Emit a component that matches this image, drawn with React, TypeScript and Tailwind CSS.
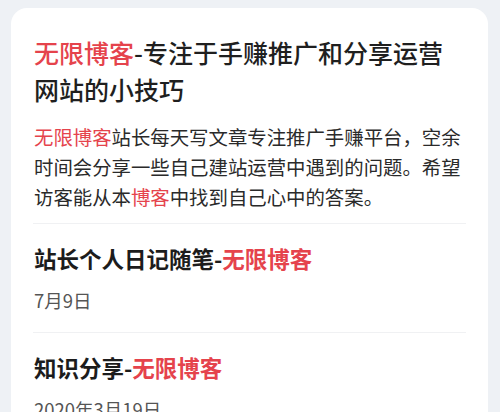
import React from "react";

const red = "text-[#e5434c]";

const posts = [
  { title: "站长个人日记随笔", date: "7月9日" },
  { title: "知识分享", date: "2020年3月19日" },
];

export default function App() {
  return (
    <div
      className="h-[412px] overflow-hidden bg-[#eef1f5] pt-2 pl-[11px] pr-3"
      style={{ fontFamily: '"Noto Sans CJK SC", "Noto Sans", sans-serif' }}
    >
      <div className="rounded-2xl bg-white px-[22px] pt-[26px] pb-8">
        {/* Intro */}
        <h1 className="text-[25px] leading-[37px] font-medium text-[#1f1f1f] pl-px">
          <span className={red}>无限博客</span>-专注于手赚推广和分享运营网站的小技巧
        </h1>
        <p className="mt-[14px] text-[19.4px] leading-[30px] text-[#2a2a2a] pl-px">
          <span className={red}>无限博客</span>站长每天写文章专注推广手赚平台，空余时间会分享一些自己建站运营中遇到的问题。希望访客能从本
          <span className={red}>博客</span>中找到自己心中的答案。
        </p>

        {/* Post list */}
        <div className="mt-[11px]">
          {posts.map((post, index) => (
            <div key={index} className="border-t border-[#f0f1f3] pt-[18px] pb-[19px] pl-px">
              <h2 className="text-[22.5px] leading-[32px] font-semibold text-[#1c1c1c]">
                {post.title}-<span className={red}>无限博客</span>
              </h2>
              <div className="mt-[13px] text-[18.5px] leading-[26px] text-[#555]">{post.date}</div>
            </div>
          ))}
        </div>
      </div>
    </div>
  );
}
